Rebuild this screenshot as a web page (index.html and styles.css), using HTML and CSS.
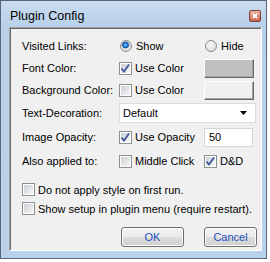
FILE: index.html
```html
<!DOCTYPE html>
<html lang="en">
<head>
  <meta charset="UTF-8">
  <title>Plugin Config</title>
  <link rel="stylesheet" href="styles.css">
</head>
<body>
  <div class="window">
    <div class="titlebar">
      <span class="title">Plugin Config</span>
      <span class="close">
        <svg width="12" height="12" viewBox="0 0 12 12">
          <path d="M3.5 3.5 L8.5 8.5 M8.5 3.5 L3.5 8.5" stroke="#fff" stroke-width="2"/>
        </svg>
      </span>
    </div>

    <div class="client">
      <div class="grid">
        <div class="label">Visited Links:</div>
        <div class="opt"><span class="radio on"></span>Show</div>
        <div class="opt"><span class="radio"></span>Hide</div>

        <div class="label">Font Color:</div>
        <div class="opt"><span class="check on"><svg width="11" height="11" viewBox="0 0 11 11"><path d="M1.5 5.5 L4 8.5 L9 1.5" fill="none" stroke="#3f569a" stroke-width="1.8"/></svg></span>Use Color</div>
        <div class="opt"><span class="swatch gray"></span></div>

        <div class="label">Background Color:</div>
        <div class="opt"><span class="check"></span>Use Color</div>
        <div class="opt"><span class="swatch"></span></div>

        <div class="label">Text-Decoration:</div>
        <div class="opt wide">
          <div class="select">
            <span>Default</span>
            <svg width="8" height="5" viewBox="0 0 8 5"><path d="M0 0 H7 L3.5 4 Z" fill="#000"/></svg>
          </div>
        </div>

        <div class="label">Image Opacity:</div>
        <div class="opt"><span class="check on"><svg width="11" height="11" viewBox="0 0 11 11"><path d="M1.5 5.5 L4 8.5 L9 1.5" fill="none" stroke="#3f569a" stroke-width="1.8"/></svg></span>Use Opacity</div>
        <div class="opt"><div class="textbox">50</div></div>

        <div class="label">Also applied to:</div>
        <div class="opt"><span class="check"></span>Middle Click</div>
        <div class="opt"><span class="check on"><svg width="11" height="11" viewBox="0 0 11 11"><path d="M1.5 5.5 L4 8.5 L9 1.5" fill="none" stroke="#3f569a" stroke-width="1.8"/></svg></span>D&amp;D</div>
      </div>

      <div class="check-row first"><span class="check"></span>Do not apply style on first run.</div>
      <div class="check-row"><span class="check"></span>Show setup in plugin menu (require restart).</div>

      <div class="buttons">
        <button class="btn ok">OK</button>
        <button class="btn cancel">Cancel</button>
      </div>
    </div>
  </div>
</body>
</html>
```

FILE: styles.css
```css
html, body {
  margin: 0;
  padding: 0;
  background: #ffffff;
}
body {
  font-family: "Liberation Sans", Arial, sans-serif;
  font-size: 11px;
  color: #000;
}
.window {
  width: 267px;
  height: 259px;
  box-sizing: border-box;
  border: 1px solid #5a6676;
  background: linear-gradient(#cadcf0, #b8d0ea 26px, #b9d1ea);
  padding: 0 4px 7px 8px;
}
.titlebar {
  height: 26px;
  box-sizing: border-box;
  padding: 4px 1px 0 1px;
  display: flex;
  align-items: center;
  justify-content: space-between;
}
.title {
  font-size: 12.5px;
}
.close {
  width: 12px;
  height: 12px;
  box-sizing: border-box;
  border: 1px solid #7d3f3a;
  border-radius: 2px;
  background: linear-gradient(#eab6a8, #c9634e);
  display: flex;
  align-items: center;
  justify-content: center;
}
.close svg {
  width: 10px;
  height: 10px;
}
.client {
  height: 224px;
  box-sizing: border-box;
  background: #f0f0f0;
  border: 1px solid;
  border-color: #a0a0a0 #ffffff #ffffff #a0a0a0;
  box-shadow: inset 1px 1px 0 #696969;
  padding: 7px 4px 0 12px;
}
.grid {
  display: grid;
  grid-template-columns: 97px 85px 52px;
  grid-template-rows: 22px 22px 22px 24px 24px 24px;
  align-items: center;
}
.label {
  white-space: nowrap;
}
.opt {
  display: flex;
  align-items: center;
  gap: 3px;
  white-space: nowrap;
}
.opt.wide {
  grid-column: 2 / 4;
}
.check {
  width: 13px;
  height: 13px;
  box-sizing: border-box;
  border: 1px solid #8e8f8f;
  padding: 1px;
  background: linear-gradient(135deg, #cbcfd5, #f7f7f7) content-box, #fff;
  display: inline-flex;
  flex: none;
}
.check svg {
  margin: -1px;
}
.radio {
  width: 12px;
  height: 12px;
  box-sizing: border-box;
  border: 1px solid #8e8f8f;
  border-radius: 50%;
  background: radial-gradient(circle at 40% 40%, #f8f8f8, #cfd3d8);
  flex: none;
  margin: 0 1px 0 1px;
}
.radio.on {
  background: radial-gradient(circle at 45% 40%, #9fdcff 0, #2b8ae0 1.5px, #0b4aa6 3px, #d2d6db 3.6px, #f4f4f4 100%);
}
.swatch {
  width: 50px;
  height: 19px;
  box-sizing: border-box;
  border: 1px solid;
  border-color: #ffffff #696969 #696969 #ffffff;
  box-shadow: inset -1px -1px 0 #a0a0a0;
  background: #f0f0f0;
}
.swatch.gray {
  background: #c0c0c0;
}
.select {
  width: 137px;
  height: 20px;
  box-sizing: border-box;
  border: 1px solid #dcdcdc;
  background: #fff;
  display: flex;
  align-items: center;
  justify-content: space-between;
  padding: 0 7px 0 3px;
}
.textbox {
  width: 49px;
  height: 19px;
  box-sizing: border-box;
  border: 1px solid #d4d6da;
  background: #fff;
  display: flex;
  align-items: center;
  padding-left: 4px;
}
.check-row {
  height: 19px;
  display: flex;
  align-items: center;
  gap: 3px;
  white-space: nowrap;
}
.check-row.first {
  margin-top: 7px;
}
.buttons {
  margin-top: 9px;
  display: flex;
  justify-content: flex-end;
  gap: 20px;
  padding-right: 0;
}
.btn {
  height: 20px;
  box-sizing: border-box;
  border: 1px solid #707070;
  border-radius: 3px;
  background: linear-gradient(#f2f2f2 0, #ebebeb 50%, #dddddd 51%, #cfcfcf 100%);
  box-shadow: inset 0 0 0 1px #fcfcfc;
  font-family: "Liberation Sans", Arial, sans-serif;
  font-size: 11px;
  color: #1e4fc0;
  padding: 0;
}
.btn.ok {
  width: 63px;
}
.btn.cancel {
  width: 53px;
}
```
